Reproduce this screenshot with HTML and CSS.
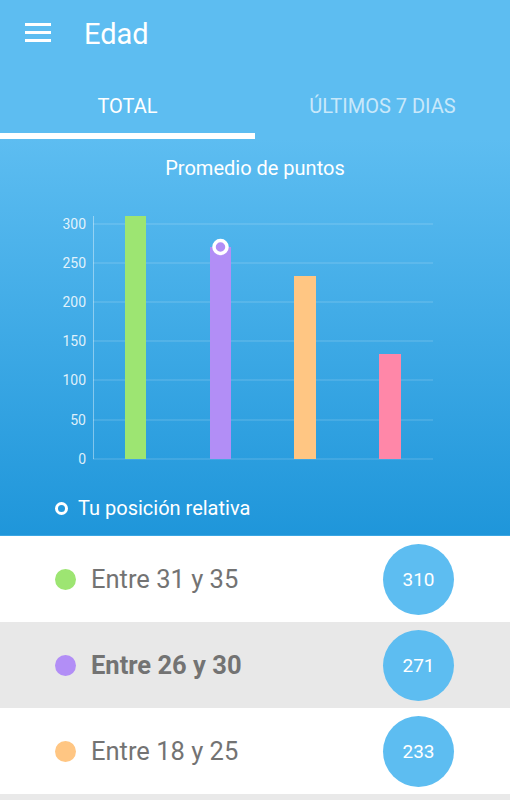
FILE: index.html
```html
<!DOCTYPE html>
<html lang="es">
<head>
  <meta charset="utf-8" />
  <meta name="viewport" content="width=device-width, initial-scale=1" />
  <title>Edad</title>
  <link rel="stylesheet" href="styles.css">
</head>
<body>
  <header class="appbar">
    <svg class="menu" width="26" height="19" viewBox="0 0 26 19">
      <rect x="0" y="0" width="26" height="3" fill="white"/>
      <rect x="0" y="8" width="26" height="3" fill="white"/>
      <rect x="0" y="16" width="26" height="3" fill="white"/>
    </svg>
    <h1>Edad</h1>
  </header>

  <nav class="tabs">
    <a class="tab active">TOTAL</a>
    <a class="tab">ÚLTIMOS 7 DIAS</a>
  </nav>

  <section class="stats">
    <h2>Promedio de puntos</h2>
    <svg class="chart" width="510" height="280" viewBox="0 195 510 280">
      <g class="grid">
        <line x1="93" y1="224" x2="433" y2="224"/>
        <line x1="93" y1="263" x2="433" y2="263"/>
        <line x1="93" y1="302" x2="433" y2="302"/>
        <line x1="93" y1="341" x2="433" y2="341"/>
        <line x1="93" y1="380" x2="433" y2="380"/>
        <line x1="93" y1="420" x2="433" y2="420"/>
        <line x1="93" y1="459" x2="433" y2="459"/>
      </g>
      <line class="axis" x1="93.5" y1="216" x2="93.5" y2="459"/>
      <g class="ticks">
        <text x="86" y="229">300</text>
        <text x="86" y="268">250</text>
        <text x="86" y="307">200</text>
        <text x="86" y="346">150</text>
        <text x="86" y="385">100</text>
        <text x="86" y="425">50</text>
        <text x="86" y="464">0</text>
      </g>
      <rect x="125" y="216" width="21" height="243" fill="#9de572"/>
      <rect x="210" y="247" width="21" height="212" fill="#b28ef6"/>
      <rect x="294" y="276" width="22" height="183" fill="#ffc683"/>
      <rect x="379" y="354" width="22" height="105" fill="#ff87a8"/>
      <circle cx="220.5" cy="247" r="6.5" fill="#b28ef6" stroke="white" stroke-width="3.5"/>
    </svg>
    <p class="legend"><span class="ring"></span>Tu posición relativa</p>
  </section>

  <ul class="groups">
    <li class="group">
      <span class="dot green"></span>
      <span class="label">Entre 31 y 35</span>
      <span class="score">310</span>
    </li>
    <li class="group mine">
      <span class="dot purple"></span>
      <span class="label">Entre 26 y 30</span>
      <span class="score">271</span>
    </li>
    <li class="group">
      <span class="dot orange"></span>
      <span class="label">Entre 18 y 25</span>
      <span class="score">233</span>
    </li>
  </ul>
  <div class="bottom"></div>
</body>
</html>
```

FILE: styles.css
```css
* {
  margin: 0;
  padding: 0;
  box-sizing: border-box;
}

body {
  --sky: #5dbdf1;
  --deep: #1f96da;

  width: 510px;
  height: 800px;
  overflow: hidden;
  background: #e9e9e9;
  font-family: Roboto, 'Noto Sans', Arial, sans-serif;
}

.appbar {
  display: flex;
  align-items: center;
  gap: 33px;
  height: 66px;
  padding-left: 25px;
  background: var(--sky);
  color: white;

  .menu {
    margin-top: -1px;
  }

  h1 {
    font-size: 29px;
    font-weight: 400;
    margin-top: 1px;
  }
}

.tabs {
  display: flex;
  height: 73px;
  background: var(--sky);

  .tab {
    flex: 1;
    padding-top: 28px;
    text-align: center;
    font-size: 20px;
    font-weight: 400;
    color: rgba(255, 255, 255, .68);
    border-bottom: 6px solid transparent;
  }

  .active {
    color: white;
    border-bottom-color: white;
  }
}

.stats {
  padding: 18px 0 16px;
  background: linear-gradient(var(--sky), var(--deep));
  border-bottom: 1px solid #3aa6e3;
  color: white;

  h2 {
    font-size: 20px;
    font-weight: 400;
    line-height: 22px;
    text-align: center;
  }
}

.chart {
  display: block;
  margin-top: 16px;

  .grid line {
    stroke: rgba(255, 255, 255, .22);
    stroke-width: 1;
  }

  .axis {
    stroke: rgba(255, 255, 255, .4);
    stroke-width: 1;
  }

  .ticks text {
    fill: rgba(255, 255, 255, .85);
    font-size: 14px;
    text-anchor: end;
  }
}

.legend {
  display: flex;
  align-items: center;
  gap: 10px;
  margin-top: 22px;
  padding-left: 55px;
  font-size: 20px;
  line-height: 22px;

  .ring {
    width: 13px;
    height: 13px;
    border: 3px solid white;
    border-radius: 50%;
  }
}

.groups {
  list-style: none;
}

.group {
  display: flex;
  align-items: center;
  height: 86px;
  padding: 0 56px 0 55px;
  background: white;
  color: #737373;

  .dot {
    width: 21px;
    height: 21px;
    border-radius: 50%;
  }

  .green { background: #9de572; }
  .purple { background: #b28ef6; }
  .orange { background: #ffc683; }

  .label {
    flex: 1;
    margin-left: 15px;
    font-size: 25.5px;
  }

  .score {
    display: flex;
    align-items: center;
    justify-content: center;
    width: 71px;
    height: 71px;
    border-radius: 50%;
    background: var(--sky);
    color: white;
    font-size: 19px;
  }
}

.group.mine {
  background: #e8e8e8;

  .label {
    font-weight: 700;
  }
}

.bottom {
  height: 7px;
  border-bottom: 1px solid #7a7a7a;
}
```
